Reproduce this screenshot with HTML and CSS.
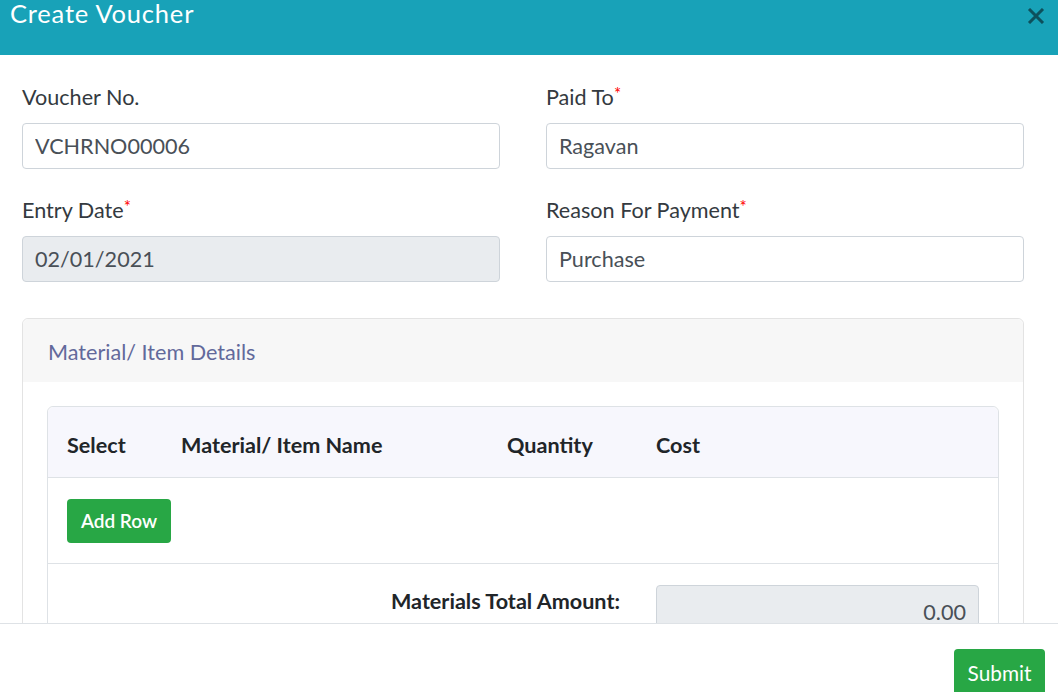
FILE: index.html
```html
<!DOCTYPE html>
<html>
	<head>
		<meta charset="UTF-8">
		<title>Create Voucher</title>
		<link rel="stylesheet" href="styles.css">
	</head>
	<body>
		<div class="modal">
			<div class="modal-head">
				<h4 class="modal-title">Create Voucher</h4>
				<span class="close">
					<svg width="18" height="16" viewBox="0 0 18 16"><path d="M2 1 L16 15 M16 1 L2 15" stroke="currentColor" stroke-width="3" fill="none"/></svg>
				</span>
			</div>
			<div class="modal-body">
				<div class="form-row">
					<div class="group">
						<label>Voucher No.</label>
						<input class="field" type="text" value="VCHRNO00006">
					</div>
					<div class="group">
						<label>Paid To<span class="req">*</span></label>
						<input class="field" type="text" value="Ragavan">
					</div>
					<div class="group">
						<label>Entry Date<span class="req">*</span></label>
						<input class="field" type="text" value="02/01/2021" disabled>
					</div>
					<div class="group">
						<label>Reason For Payment<span class="req">*</span></label>
						<input class="field" type="text" value="Purchase">
					</div>
				</div>
				<div class="card">
					<div class="card-head">Material/ Item Details</div>
					<div class="card-body">
						<div class="items">
							<div class="items-head">
								<span>Select</span>
								<span>Material/ Item Name</span>
								<span>Quantity</span>
								<span>Cost</span>
							</div>
							<div class="items-row">
								<button class="btn btn-add">Add Row</button>
							</div>
							<div class="items-total">
								<span class="total-label">Materials Total Amount:</span>
								<input class="field amount" type="text" value="0.00" disabled>
							</div>
						</div>
					</div>
				</div>
			</div>
			<div class="modal-foot">
				<button class="btn btn-submit">Submit</button>
			</div>
		</div>
	</body>
</html>
```

FILE: styles.css
```css
html,
body {
	margin: 0;
	padding: 0;
	height: 692px;
	overflow: hidden;
	background: #fff;
	font-family: Lato, "Open Sans", sans-serif;
}

.modal {
	display: flex;
	flex-direction: column;
	height: 692px;
}

.modal-head {
	height: 55px;
	flex: none;
	background: #18a2b8;
	display: flex;
	justify-content: space-between;
	padding: 0 13px 0 10px;
}

.modal-title {
	margin: 0;
	font-size: 25.5px;
	line-height: 26px;
	font-weight: 400;
	color: #fff;
	letter-spacing: 0.8px;
}

.close {
	color: #0d505c;
	padding-top: 8px;
}

.modal-body {
	height: 540px;
	flex: none;
	overflow: hidden;
	padding: 28px 34px 0 22px;
}

.form-row {
	display: grid;
	grid-template-columns: 1fr 1fr;
	column-gap: 46px;
	row-gap: 27px;
}

.group label {
	display: block;
	font-size: 21.6px;
	line-height: 28.8px;
	color: #343a40;
	margin-bottom: 11px;
}

.req {
	color: #f00;
	font-size: 17px;
	vertical-align: top;
	line-height: 22px;
}

.field {
	display: block;
	box-sizing: border-box;
	width: 100%;
	height: 46px;
	padding: 0 12px;
	border: 1px solid #ced4da;
	border-radius: 4px;
	background: #fff;
	font-family: Lato, sans-serif;
	font-size: 21.6px;
	color: #495057;
}

.field:disabled {
	background: #e9ecef;
	color: #495057;
	opacity: 1;
}

.card {
	margin-top: 36px;
	border: 1px solid #e3e3e3;
	border-radius: 6px;
}

.card-head {
	height: 63px;
	line-height: 66px;
	background: #f7f7f7;
	padding-left: 25px;
	font-size: 21.6px;
	color: #62699b;
	border-radius: 6px 6px 0 0;
}

.card-body {
	padding: 24px;
}

.items {
	border: 1px solid #dee2e6;
	border-radius: 6px;
}

.items-head,
.items-total {
	display: grid;
	grid-template-columns: 114px 326px 149px 1fr;
	padding: 0 19px;
}

.items-head {
	height: 70px;
	line-height: 76px;
	background: #f7f7fd;
	border-bottom: 1px solid #dee2e6;
	border-radius: 6px 6px 0 0;
	font-size: 21.6px;
	font-weight: 700;
	color: #212529;
}

.items-row {
	padding: 21px 19px 20px;
	border-bottom: 1px solid #dee2e6;
}

.btn {
	border: none;
	border-radius: 4px;
	background: #28a745;
	color: #fff;
	font-family: Lato, sans-serif;
	cursor: pointer;
}

.btn-add {
	width: 104px;
	height: 44px;
	font-size: 19px;
	font-weight: 600;
}

.items-total {
	padding-top: 21px;
	padding-bottom: 20px;
	align-items: start;
}

.total-label {
	grid-column: 1 / 4;
	text-align: right;
	padding-right: 36px;
	padding-top: 3px;
	font-size: 21.6px;
	font-weight: 700;
	color: #212529;
}

.amount {
	text-align: right;
	padding-top: 8px;
}

.modal-foot {
	flex: none;
	border-top: 1px solid #dee2e6;
	padding: 25px 13px 0 0;
	display: flex;
	justify-content: flex-end;
}

.btn-submit {
	width: 91px;
	height: 46px;
	font-size: 20.8px;
}
```
